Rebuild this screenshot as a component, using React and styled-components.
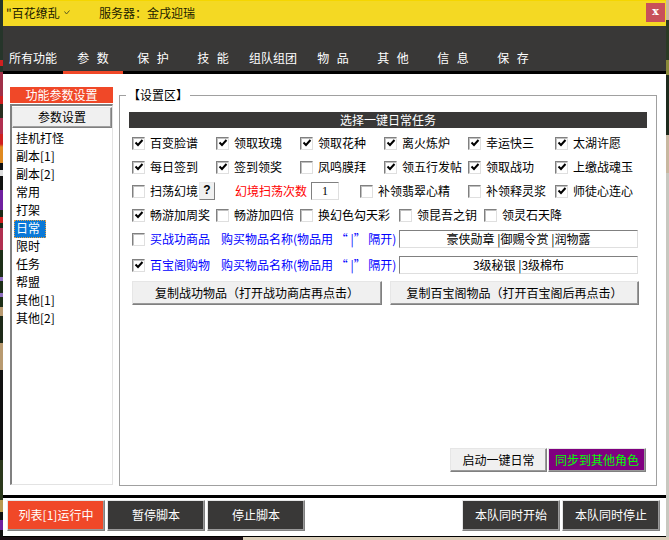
import React from "react";
import styled, { createGlobalStyle } from "styled-components";

const Global = createGlobalStyle`
  html, body { margin: 0; padding: 0; width: 669px; height: 540px; overflow: hidden; }
  body {
    background: #1a0f14;
    font-family: "Noto Sans CJK SC", "Liberation Sans", sans-serif;
    font-size: 12px;
    color: #000;
  }
`;

const Backdrop = styled.div`
  width: 669px;
  height: 540px;
  padding: 0 3px 3px;
  box-sizing: border-box;
  background:
    linear-gradient(90deg, #1a0f14 0 243px, #d9cdb8 243px 100%) left bottom / 100% 3px no-repeat,
    linear-gradient(180deg, #c9b8a0 0 20px, #2b3a24 20px 60px, #8a8a3a 60px 75px, #1e2a1c 75px 135px, #c8b8a0 135px 173px, #c8c8c0 173px 100%) right top / 3px 100% no-repeat,
    linear-gradient(180deg, #26352a 0 60px, #d02020 60px 66px, #26352a 66px 72px, #a03048 72px 96px, #d02020 96px 104px, #2a2f20 104px 118px, #b03050 118px 134px, #d02020 134px 144px, #e08a20 147px 163px, #111 163px 170px, #ddd 170px 176px, #111 176px 190px, #7020a0 190px 210px, #1c2a18 210px 217px, #d02020 217px 223px, #1c2a18 223px 228px, #b03050 228px 250px, #1e3018 250px 277px, #9070c0 277px 281px, #1e3018 281px 293px, #9070c0 293px 297px, #1e3018 297px 307px, #b89a70 307px 316px, #1e2a18 316px 343px, #b89a70 343px 370px, #111 370px 460px, #2c3a1c 460px 500px, #b89a50 500px 512px, #111 512px 520px, #7020a0 520px 530px, #111 530px 100%) left top / 3px 100% no-repeat,
    #1a0f14;
`;
const Win = styled.div`
  width: 663px;
  height: 537px;
  display: flex;
  flex-direction: column;
  background: #fff;
  border-bottom: 1px solid #000;
  box-sizing: border-box;
`;
const TitleBar = styled.div`
  height: 26px;
  flex: none;
  background: #f4d923;
  border-top: 1px solid #f5d600;
  box-sizing: border-box;
  display: flex;
  align-items: center;
  padding: 0 0 2px 3px;
  color: #1c1c00;
`;
const Role = styled.span`
  width: 93px;
  white-space: nowrap;
  display: flex;
  align-items: center;
  gap: 4px;
`;
const Server = styled.span`
  flex: 1;
`;
const Close = styled.div`
  width: 19px;
  height: 19px;
  align-self: flex-start;
  margin: 2px 1px 0 0;
  background: #c8505a;
  color: #fff;
  font: bold 11px/18px "DejaVu Serif", serif;
  text-align: center;
`;
const TabBar = styled.div`
  height: 45px;
  flex: none;
  display: flex;
  background: #393837;
  border-bottom: 3px solid #000;
`;
const Tab = styled.div`
  width: 60px;
  height: 45px;
  box-sizing: border-box;
  padding-top: 23px;
  text-align: center;
  line-height: 18px;
  color: #fff;
  word-spacing: 5px;
  white-space: nowrap;
  position: relative;
  &::after {
    content: "";
    display: ${p => (p.$active ? "block" : "none")};
    position: absolute;
    left: 0;
    right: 0;
    bottom: -3px;
    height: 3px;
    background: #f04828;
  }
`;
const Body = styled.div`
  height: 421px;
  flex: none;
  box-sizing: border-box;
  padding: 13px 9px 0 7px;
  display: flex;
  gap: 6px;
`;
const Side = styled.div`
  width: 103px;
  height: 398px;
  display: flex;
  flex-direction: column;
`;
const SideTitle = styled.div`
  height: 16px;
  flex: none;
  background: #f04828;
  color: #fff;
  text-align: center;
  line-height: 15px;
`;
const SideList = styled.div`
  flex: 1;
  margin-top: 1px;
  box-sizing: border-box;
  border-style: solid;
  border-width: 2px 1px 1px 2px;
  border-color: #808080 #e3e3e3 #e3e3e3 #808080;
  padding-top: 1px;
  background: #fff;
`;
const SideBtn = styled.div`
  height: 21px;
  margin-bottom: 2px;
  box-sizing: border-box;
  background: #f0f0f0;
  border: 1px solid;
  border-color: #e8e8e8 #808080 #808080 #e8e8e8;
  box-shadow: inset -1px -1px 0 #a0a0a0;
  text-align: center;
  line-height: 18px;
`;
const Item = styled.div`
  height: 18px;
  line-height: 16px;
  margin-left: 2px;
  padding: 0 6px 0 2px;
  width: fit-content;
  box-sizing: border-box;
  white-space: nowrap;
  ${p => (p.$sel ? "background:#0a78d7;color:#fff;outline:1px dotted #e9a040;outline-offset:-1px;" : "")}
`;
const Group = styled.div`
  width: 538px;
  height: 391px;
  margin-top: 8px;
  box-sizing: border-box;
  border: 1px solid #a0a0a0;
  padding: 16px 9px 0 9px;
  position: relative;
  display: flex;
  flex-direction: column;
`;
const Legend = styled.span`
  position: absolute;
  top: -10px;
  left: 6px;
  padding: 0 2px;
  background: #fff;
  line-height: 18px;
  white-space: nowrap;
`;
const Head = styled.div`
  height: 16px;
  flex: none;
  background: #393837;
  color: #fff;
  text-align: center;
  line-height: 16px;
  margin-bottom: 3px;
`;
const Row = styled.div`
  height: 24px;
  flex: none;
  display: flex;
  align-items: center;
  padding-left: 3px;
  margin-top: ${p => p.$gap || 0}px;
  white-space: nowrap;
`;
const CheckWrap = styled.label`
  width: ${p => p.$w}px;
  flex: none;
  display: flex;
  align-items: center;
  gap: 5px;
  color: ${p => p.$color || "#000"};
`;
const CheckText = styled.span`
  padding-bottom: 2px;
`;
const Box = styled.span`
  width: 13px;
  height: 13px;
  flex: none;
  box-sizing: border-box;
  background: #fff;
  border: 1px solid;
  border-color: #808080 #dfdfdf #dfdfdf #808080;
  box-shadow: inset 1px 1px 0 #c0c0c0;
  display: flex;
  align-items: center;
  justify-content: center;
`;
const Help = styled.span`
  width: 16px;
  height: 18px;
  box-sizing: border-box;
  margin-left: 2px;
  background: #f0f0f0;
  border: 1px solid;
  border-color: #e8e8e8 #808080 #808080 #e8e8e8;
  font: bold 12px/15px "Liberation Sans", sans-serif;
  text-align: center;
  flex: none;
`;
const Red = styled.span`
  color: #ff0000;
  margin-left: 20px;
  width: 76px;
  padding-bottom: 2px;
  flex: none;
`;
const Num = styled.span`
  width: 28px;
  height: 18px;
  flex: none;
  box-sizing: border-box;
  border: 1px solid;
  border-color: #808080 #dfdfdf #dfdfdf #808080;
  text-align: center;
  font-family: "Liberation Serif", serif;
  line-height: 16px;
  margin-right: 21px;
`;
const Blue = styled.span`
  color: #0000ff;
  width: 178px;
  padding-bottom: 2px;
  flex: none;
`;
const Field = styled.div`
  width: 239px;
  height: 18px;
  flex: none;
  box-sizing: border-box;
  border: 1px solid;
  border-color: #808080 #dfdfdf #dfdfdf #808080;
  text-align: center;
  line-height: 15px;
`;
const Btn = styled.div`
  box-sizing: border-box;
  width: ${p => p.$w}px;
  height: ${p => p.$h || 24}px;
  background: ${p => p.$bg || "#f0f0f0"};
  color: ${p => p.$fg || "#000"};
  border: 1px solid;
  border-color: #e6e6e6 #808080 #808080 #e6e6e6;
  box-shadow: inset -1px -1px 0 #9a9a9a;
  text-align: center;
  line-height: ${p => (p.$h || 24) - 3}px;
  white-space: nowrap;
  flex: none;
`;
const BtnRow = styled.div`
  display: flex;
  gap: 8px;
  padding-left: 3px;
  margin-top: 4px;
`;
const Foot = styled.div`
  margin-top: auto;
  margin-bottom: 13px;
  margin-right: 1px;
  display: flex;
  justify-content: flex-end;
  gap: 1px;
`;
const Divider = styled.div`
  height: 3px;
  flex: none;
  background: #000;
`;
const Bottom = styled.div`
  flex: 1;
  box-sizing: border-box;
  padding: 2px 6px 0 4px;
  display: flex;
  gap: 2px;
`;
const Spacer = styled.div`
  flex: 1;
`;
const Tick = () => (
  <svg width="10" height="10" viewBox="0 0 10 10">
    <path d="M1.5 4.5 L4 7 L8.5 2" fill="none" stroke="#000" strokeWidth="2" />
  </svg>
);
const Chevron = () => (
  <svg width="6" height="5" viewBox="0 0 6 5">
    <path d="M0.5 1.5 L2.5 4 L5.5 0.5" fill="none" stroke="#5a5a20" strokeWidth="1" />
  </svg>
);
const Check = ({ w, on, color, children }) => (
  <CheckWrap $w={w} $color={color}>
    <Box>{on && <Tick />}</Box>
    <CheckText>{children}</CheckText>
  </CheckWrap>
);

const tabs = ["所有功能", "参 数", "保 护", "技 能", "组队组团", "物 品", "其 他", "信 息", "保 存"];
const items = ["挂机打怪", "副本[1]", "副本[2]", "常用", "打架", "日常", "限时", "任务", "帮盟", "其他[1]", "其他[2]"];
const W = [84, 84, 84, 84, 87, 90];
const BUY = "购买物品名称(物品用 “ |” 隔开)";

export default function App() {
  return (
    <Backdrop>
      <Global />
      <Win>
        <TitleBar>
          <Role>"百花缭乱<Chevron /></Role>
          <Server>服务器：金戌迎瑞</Server>
          <Close>x</Close>
        </TitleBar>
        <TabBar>
          {tabs.map((t, i) => (
            <Tab key={t} $active={i === 1}>{t}</Tab>
          ))}
        </TabBar>
        <Body>
          <Side>
            <SideTitle>功能参数设置</SideTitle>
            <SideList>
              <SideBtn>参数设置</SideBtn>
              {items.map(t => (
                <Item key={t} $sel={t === "日常"}>{t}</Item>
              ))}
            </SideList>
          </Side>
          <Group>
            <Legend>【设置区】</Legend>
            <Head>选择一键日常任务</Head>
            <Row>
              {["百变脸谱", "领取玫瑰", "领取花种", "离火炼炉", "幸运快三", "太湖许愿"].map((t, i) => (
                <Check key={t} w={W[i]} on>{t}</Check>
              ))}
            </Row>
            <Row>
              {["每日签到", "签到领奖", "凤鸣膜拜", "领五行发帖", "领取战功", "上缴战魂玉"].map((t, i) => (
                <Check key={t} w={W[i]} on={i !== 2}>{t}</Check>
              ))}
            </Row>
            <Row>
              <Check w={65}>扫荡幻境</Check>
              <Help>?</Help>
              <Red>幻境扫荡次数</Red>
              <Num>1</Num>
              <Check w={108}>补领翡翠心精</Check>
              <Check w={87}>补领释灵浆</Check>
              <Check w={90} on>师徒心连心</Check>
            </Row>
            <Row>
              <Check w={84} on>畅游加周奖</Check>
              <Check w={84}>畅游加四倍</Check>
              <Check w={99}>换幻色勾天彩</Check>
              <Check w={85}>领昆吾之钥</Check>
              <Check w={90}>领灵石天降</Check>
            </Row>
            <Row>
              <Check w={89} color="#0000ff">买战功商品</Check>
              <Blue>{BUY}</Blue>
              <Field>豪侠勋章 |御赐令赏 |润物露</Field>
            </Row>
            <Row $gap={2}>
              <Check w={89} on color="#0000ff">百宝阁购物</Check>
              <Blue>{BUY}</Blue>
              <Field>3级秘银 |3级棉布</Field>
            </Row>
            <BtnRow>
              <Btn $w={250}>复制战功物品（打开战功商店再点击）</Btn>
              <Btn $w={249}>复制百宝阁物品（打开百宝阁后再点击）</Btn>
            </BtnRow>
            <Foot>
              <Btn $w={97}>启动一键日常</Btn>
              <Btn $w={98} $bg="#800080" $fg="#00ff00">同步到其他角色</Btn>
            </Foot>
          </Group>
        </Body>
        <Divider />
        <Bottom>
          <Btn $w={98} $h={31} $bg="#f04828" $fg="#fff">列表[1]运行中</Btn>
          <Btn $w={98} $h={31} $bg="#393837" $fg="#fff">暂停脚本</Btn>
          <Btn $w={98} $h={31} $bg="#393837" $fg="#fff">停止脚本</Btn>
          <Spacer />
          <Btn $w={98} $h={31} $bg="#393837" $fg="#fff">本队同时开始</Btn>
          <Btn $w={98} $h={31} $bg="#393837" $fg="#fff">本队同时停止</Btn>
        </Bottom>
      </Win>
    </Backdrop>
  );
}
